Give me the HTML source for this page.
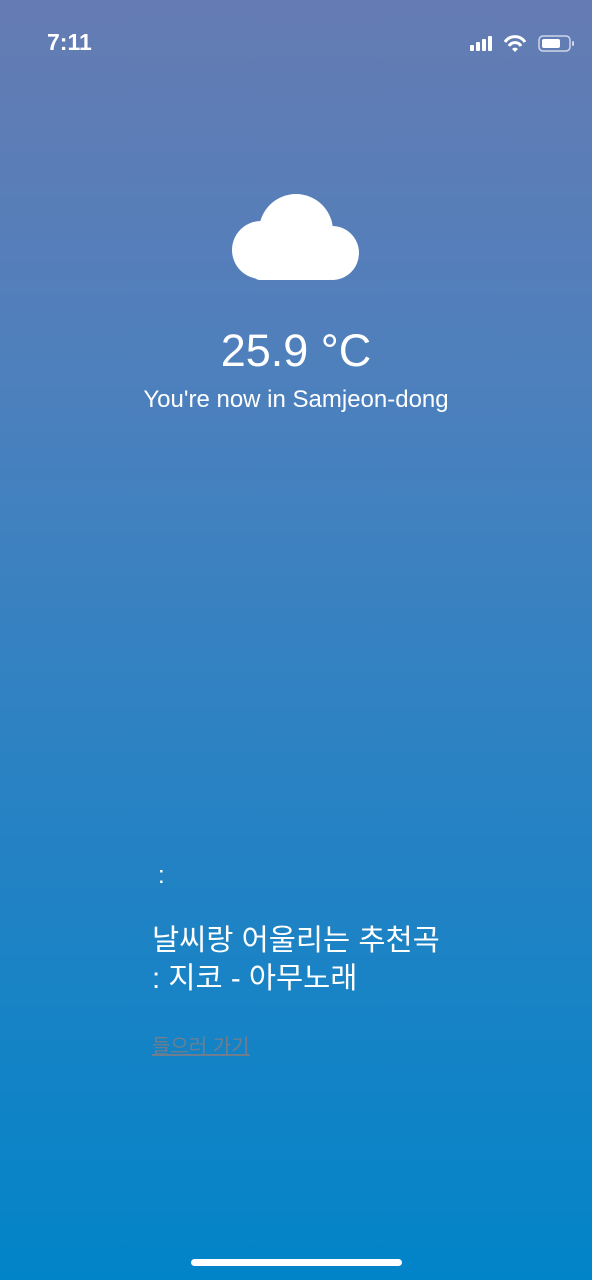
<!DOCTYPE html>
<html><head><meta charset="utf-8"><style>
body{margin:0;width:592px;height:1280px;overflow:hidden;background:linear-gradient(#657bb3 0%,#4d80bd 30%,#2a82c3 60%,#0284c8 100%);font-family:"Liberation Sans","Noto Sans CJK KR",sans-serif;color:#fff;position:relative}
.a{position:absolute}
</style></head><body>
<div class="a" style="left:47px;top:29px;font-size:23px;font-weight:bold">7:11</div>
<svg class="a" style="left:468px;top:34px" width="110" height="20">
<rect x="2" y="11" width="4" height="6" rx="1" fill="#fff"/><rect x="8" y="8" width="4" height="9" rx="1" fill="#fff"/><rect x="14" y="5" width="4" height="12" rx="1" fill="#fff"/><rect x="20" y="2" width="4" height="15" rx="1" fill="#fff"/>
<path d="M37 8a12 12 0 0 1 20 0" stroke="#fff" stroke-width="3" fill="none"/><path d="M41 12a7 7 0 0 1 12 0" stroke="#fff" stroke-width="3" fill="none"/><path d="M44 15l3 3 3-3a4 4 0 0 0-6 0z" fill="#fff"/>
<rect x="71" y="2" width="31" height="15" rx="4" stroke="#cfd6ea" stroke-width="1.5" fill="none"/><rect x="74" y="5" width="18" height="9" rx="2" fill="#fff"/><rect x="104" y="7" width="2" height="5" rx="1" fill="#cfd6ea"/>
</svg>
<svg class="a" style="left:232px;top:194px" width="127" height="87" viewBox="0 0 127 87">
<circle cx="64" cy="37" r="37" fill="#fff"/>
<circle cx="29" cy="56" r="29" fill="#fff"/>
<circle cx="100" cy="59" r="27" fill="#fff"/>
<rect x="20" y="50" width="84" height="36" rx="8" fill="#fff"/>
</svg>
<div class="a" style="left:0;width:592px;top:325px;text-align:center;font-size:45px">25.9 °C</div>
<div class="a" style="left:0;width:592px;top:386px;text-align:center;font-size:24px">You're now in Samjeon-dong</div>
<div class="a" style="left:158px;top:862px;font-size:24px">:</div>
<div class="a" style="left:152px;top:922px;font-size:29.5px;line-height:38px">날씨랑 어울리는 추천곡<br>: 지코 - 아무노래</div>
<div class="a" style="left:152px;top:1030px;font-size:20px;color:#6f7e8e;text-decoration:underline">들으러 가기</div>
<div class="a" style="left:191px;top:1259px;width:211px;height:7px;border-radius:4px;background:#fff"></div>
</body></html>
